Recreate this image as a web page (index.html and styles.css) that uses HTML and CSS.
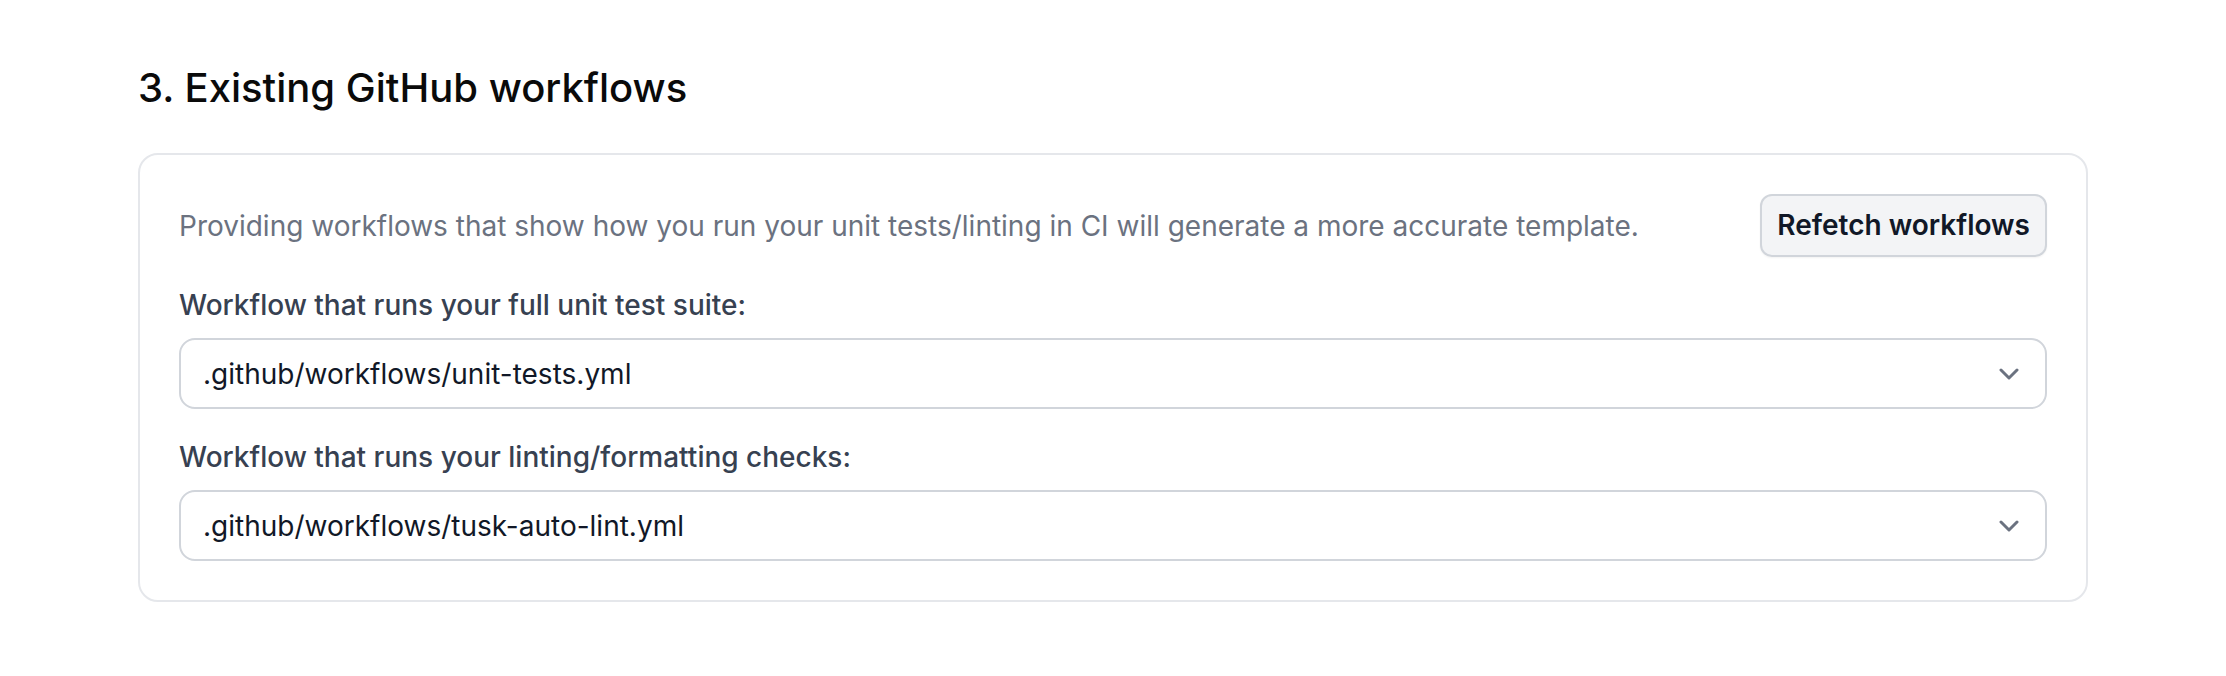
FILE: index.html
```html
<!DOCTYPE html>
<html lang="en">
<head>
  <meta charset="UTF-8" />
  <meta name="viewport" content="width=device-width, initial-scale=1.0"/>
  <title>Existing GitHub workflows</title>
  <link rel="stylesheet" href="styles.css">
</head>
<body>

  <section class="page">
    <h2 class="section-title">3. Existing GitHub workflows</h2>

    <div class="card">
      <div class="card-head">
        <p class="hint">Providing workflows that show how you run your unit tests/linting in CI will generate a more accurate template.</p>
        <button class="btn">Refetch workflows</button>
      </div>

      <div class="field">
        <label class="field-label">Workflow that runs your full unit test suite:</label>
        <div class="select">
          <span>.github/workflows/unit-tests.yml</span>
          <svg class="chevron" viewBox="0 0 20 12" width="20" height="12"><path d="M2 2l8 8 8-8" fill="none" stroke="#6b7280" stroke-width="3" stroke-linecap="round" stroke-linejoin="round"/></svg>
        </div>
      </div>

      <div class="field">
        <label class="field-label">Workflow that runs your linting/formatting checks:</label>
        <div class="select">
          <span>.github/workflows/tusk-auto-lint.yml</span>
          <svg class="chevron" viewBox="0 0 20 12" width="20" height="12"><path d="M2 2l8 8 8-8" fill="none" stroke="#6b7280" stroke-width="3" stroke-linecap="round" stroke-linejoin="round"/></svg>
        </div>
      </div>
    </div>
  </section>

</body>
</html>
```

FILE: styles.css
```css
body {
  margin: 0;
  font-family: 'Inter', 'Noto Sans', sans-serif;
  background-color: #fff;
  color: #111827;
}
.page {
  padding: 64px 138px 0;
}
.section-title {
  margin: 0 0 41px;
  font-size: 40px;
  line-height: 48px;
  font-weight: 500;
  color: #0a0a0a;
}
.card {
  border: 2px solid #e5e7eb;
  border-radius: 20px;
  padding: 39px;
  display: flex;
  flex-direction: column;
  gap: 30px;
}
.card-head {
  display: flex;
  justify-content: space-between;
  align-items: center;
  gap: 30px;
}
.hint {
  margin: 0;
  font-size: 28px;
  line-height: 40px;
  color: #6b7280;
}
.btn {
  font-family: inherit;
  font-size: 28px;
  line-height: 35px;
  font-weight: 600;
  color: #111827;
  background: #f3f4f6;
  border: 2px solid #d1d5db;
  border-radius: 12px;
  padding: 12px 15px;
  box-shadow: 0 1px 2px rgba(0, 0, 0, 0.05);
  cursor: pointer;
}
.field {
  display: flex;
  flex-direction: column;
  gap: 15px;
}
.field-label {
  font-size: 28px;
  line-height: 36px;
  font-weight: 500;
  color: #374151;
}
.select {
  display: flex;
  align-items: center;
  justify-content: space-between;
  height: 67px;
  padding: 0 26px 0 22px;
  border: 2px solid #d1d5db;
  border-radius: 16px;
  font-size: 28px;
  color: #111827;
}
.chevron {
  flex-shrink: 0;
}
```
